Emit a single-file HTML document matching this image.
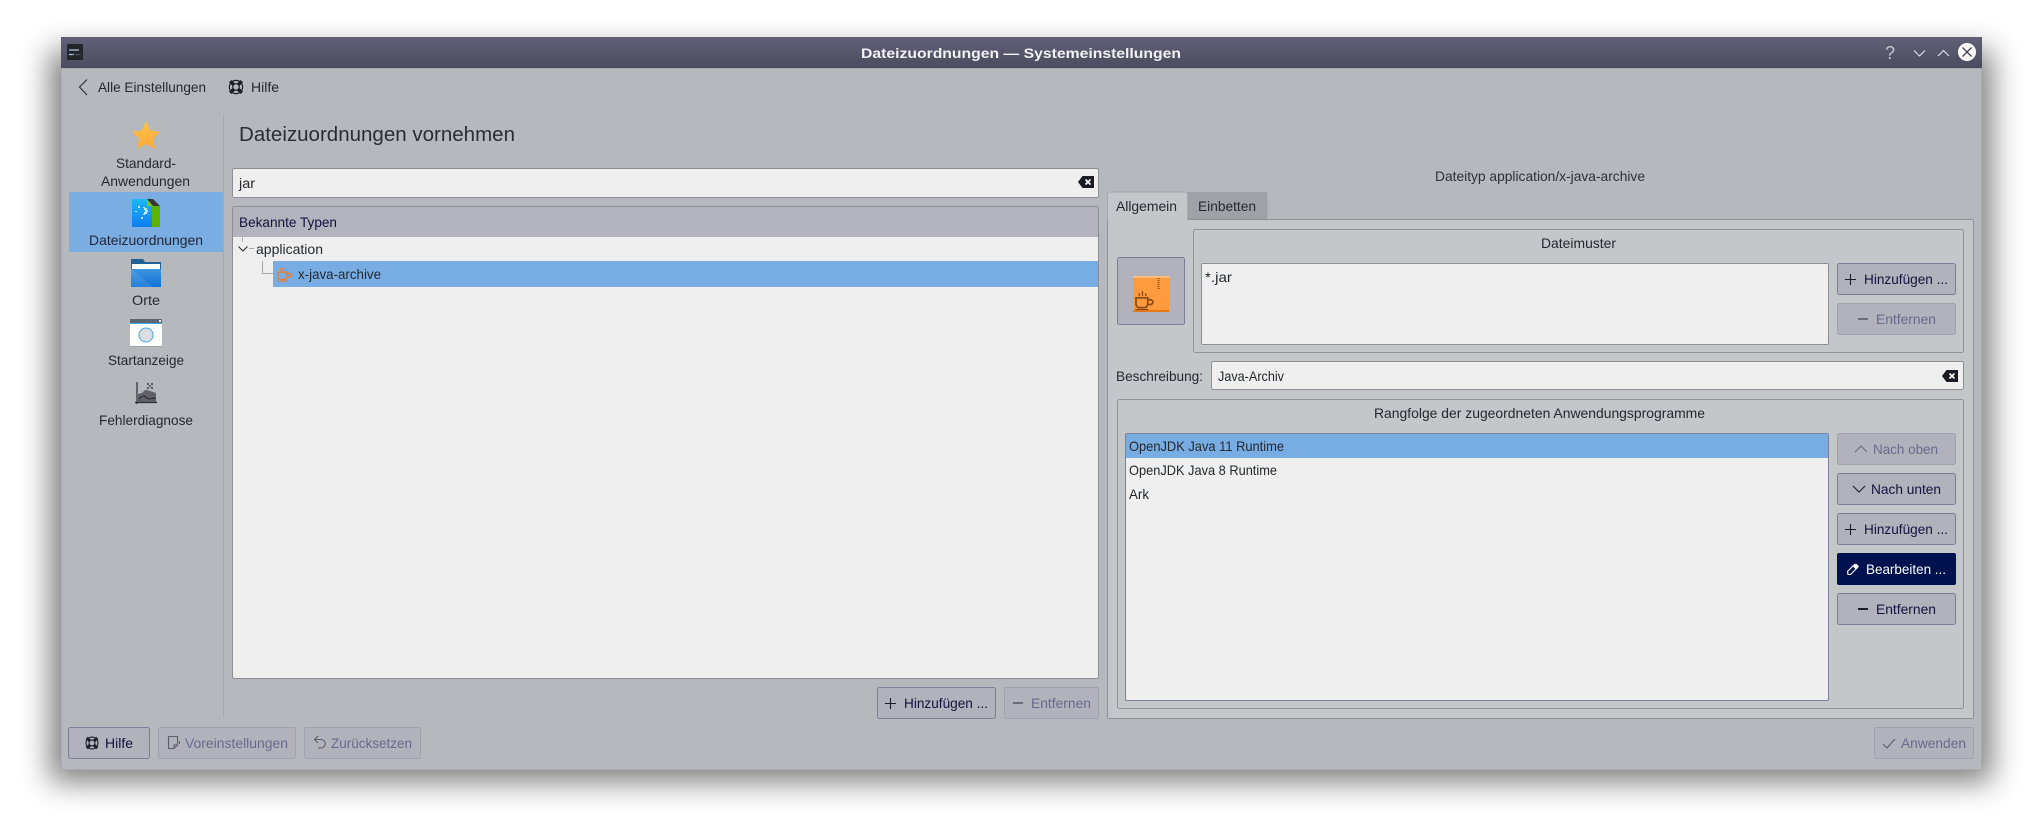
<!DOCTYPE html>
<html lang="de"><head><meta charset="utf-8"><title>Dateizuordnungen — Systemeinstellungen</title>
<style>
html,body{margin:0;padding:0;background:#fff;width:2042px;height:831px;overflow:hidden}
svg{display:block;position:absolute;left:0;top:0}
text{font-family:"Liberation Sans",sans-serif;font-size:14px;fill:#25282c}
.b{fill:#12123f}.d{fill:#666a8c}.w{fill:#fff}
.btn{fill:#b2b2bc;stroke:#7d7d98}.dis{fill:#b2b2bc;stroke:#a0a0ae}
.f{fill:#efefef;stroke:#8d8e94}.g{fill:#c3c7ca;stroke:#8f9297}
</style></head><body>
<svg width="2042" height="831" viewBox="0 0 2042 831" xmlns="http://www.w3.org/2000/svg">
<defs>
<filter id="sh" x="-10%" y="-20%" width="120%" height="140%"><feGaussianBlur stdDeviation="15"/></filter>
<linearGradient id="tb" x1="0" y1="0" x2="0" y2="1"><stop offset="0" stop-color="#616177"/><stop offset="1" stop-color="#4c4c60"/></linearGradient>
<linearGradient id="st" x1="0" y1="0" x2="0" y2="1"><stop offset="0" stop-color="#ffc24d"/><stop offset="1" stop-color="#fda93a"/></linearGradient>
<linearGradient id="bl" x1="0" y1="0" x2="0" y2="1"><stop offset="0" stop-color="#1cb8f4"/><stop offset="1" stop-color="#0f7df0"/></linearGradient>
<linearGradient id="fo" x1="0" y1="0" x2="0" y2="1"><stop offset="0" stop-color="#3f95dd"/><stop offset="1" stop-color="#0b72d6"/></linearGradient>
<g id="buoy"><circle cx="0" cy="0" r="6.600" fill="none" stroke="#1c1e26" stroke-width="1.200"/><circle cx="0" cy="0" r="3.300" fill="none" stroke="#1c1e26" stroke-width="1.200"/><path d="M-5.800-5.800L-2.400-2.400M5.800-5.800L2.400-2.400M-5.800 5.800L-2.400 2.400M5.800 5.800L2.400 2.400" stroke="#1c1e26" stroke-width="3.400" fill="none"/></g>
<g id="clr"><path d="M-8 0L-3.500-6H8V6H-3.500Z" fill="#1a1b22"/><path d="M-0.500-2.500L4.500 2.500M4.500-2.500L-0.500 2.500" stroke="#fff" stroke-width="1.600"/></g>
<g id="cup"><path d="M0 6h9v5a2.500 2.500 0 0 1-2.500 2.500h-4A2.500 2.500 0 0 1 0 11zM9 7.500h2.200a1.300 1.300 0 0 1 0 3.600H9" fill="none" stroke-width="1.300"/><path d="M2.500 4.500v-2M5 4.500V1M7.500 4.500v-2M-.5 15h10" fill="none" stroke-width="1"/></g>
</defs>

<!-- shadow + window -->
<rect x="50" y="50" width="1942" height="732" fill="#000" opacity=".5" filter="url(#sh)"/>
<rect x="61" y="37" width="1921" height="733" fill="#b5b8bd"/>
<rect x="61.500" y="68.500" width="1920" height="701" fill="none" stroke="#a9acb1"/>
<rect x="61" y="37" width="1921" height="31" fill="url(#tb)"/>

<!-- titlebar -->
<rect x="67" y="44" width="16" height="16" rx="1" fill="#22262a"/>
<path d="M69 50h10M69 54.500h3" stroke="#b9c6d2" stroke-width="1.300"/><path d="M75 54.500h6" stroke="#4d5257" stroke-width="1.300"/><path d="M72 54.500h2" stroke="#5ab5e5" stroke-width="1.300"/>
<text x="861" y="58" font-weight="bold" textLength="320" lengthAdjust="spacingAndGlyphs" style="fill:#f2f2f5">Dateizuordnungen — Systemeinstellungen</text>
<text x="1885" y="59" style="fill:#c4c4cf;font-size:18px">?</text>
<path d="M1914 50.500l5.500 5.500 5.500-5.500M1938 56l5.500-5.500 5.500 5.500" fill="none" stroke="#e4e4ea" stroke-width="1.100"/>
<circle cx="1967" cy="52" r="9" fill="#fbfbfc"/><path d="M1962.500 47.500l9 9M1971.500 47.500l-9 9" stroke="#43435a" stroke-width="1.300"/>

<!-- toolbar -->
<path d="M87 79.500L79.500 87l7.500 8" fill="none" stroke="#2a2c33" stroke-width="1.100"/>
<text x="98" y="92" textLength="108" lengthAdjust="spacingAndGlyphs">Alle Einstellungen</text>
<use href="#buoy" x="236" y="87"/>
<text x="251" y="92" textLength="28" lengthAdjust="spacingAndGlyphs">Hilfe</text>

<!-- sidebar -->
<polygon points="146,121 150.400,130.500 160,131.800 153,138.800 154.900,149 146,144 137.100,149 139,138.800 132,131.800 141.600,130.500" fill="url(#st)"/>
<text x="116" y="168" textLength="60" lengthAdjust="spacingAndGlyphs">Standard-</text>
<text x="101" y="186" textLength="89" lengthAdjust="spacingAndGlyphs">Anwendungen</text>
<rect x="69" y="192" width="154" height="60" fill="#7aaee3"/>
<rect x="132" y="199" width="21" height="28" fill="url(#bl)"/>
<rect x="154" y="206" width="6" height="21" fill="#5bb400"/><path d="M147 199h6v7zM152 206h2v21h-2z" fill="#5bb400"/>
<path d="M147 199h6l7 7h-13z" fill="#34363a"/><path d="M147 199l6 7h-6z" fill="#79c81c"/>
<path d="M143 207h2v1h2v2h1v2h-1v2h-2v1h-2v-1h1v-2h1v-2h-1v-2h-1zM138 206h2v2h-2zM135 211h2v1h-2zM141 217h2v2h-2z" fill="#bfe6ff"/>
<text x="89" y="245" textLength="114" lengthAdjust="spacingAndGlyphs" style="fill:#1f2436">Dateizuordnungen</text>
<path d="M131 287v-28h12l2 3h16v25z" fill="#1f6398"/>
<rect x="132" y="264" width="28" height="5" fill="#fff"/>
<path d="M131 269h30v18h-30z" fill="url(#fo)"/><path d="M131 269v18h22z" fill="#fff" opacity=".1"/>
<text x="132" y="305" textLength="28" lengthAdjust="spacingAndGlyphs">Orte</text>
<rect x="130" y="319" width="32" height="28" fill="#fff"/><rect x="130" y="319" width="32" height="4" fill="#5a6672"/><rect x="130" y="323" width="32" height="1" fill="#3daee9"/>
<rect x="159" y="320" width="2" height="2" fill="#eee"/><rect x="130" y="346" width="32" height="1" fill="#9ea1a5"/>
<circle cx="146" cy="335" r="7" fill="#dcdde0" stroke="#3daee9" stroke-width="1"/>
<text x="108" y="365" textLength="76" lengthAdjust="spacingAndGlyphs">Startanzeige</text>
<path d="M137 382v22M135 402.500h22" stroke="#2a2c34" stroke-width="1.200" fill="none"/>
<path d="M138 402v-8l4-1 3-3h2l3 1 3 1 3 1v9z" fill="#5f6068"/><path d="M139 399c3-3 4-3 5-3s3 3 5 3 3-1 7-1" fill="none" stroke="#25262c"/>
<path d="M147 384h2M151 384h2M149 386h2M147 388h2M151 388h2" stroke="#25262c" stroke-width="1.200"/>
<text x="99" y="425" textLength="94" lengthAdjust="spacingAndGlyphs">Fehlerdiagnose</text>
<path d="M223.500 114v604" stroke="#89b0dd"/>

<!-- heading -->
<text x="239" y="141" textLength="276" lengthAdjust="spacingAndGlyphs" style="font-size:20px;fill:#2a2d35">Dateizuordnungen vornehmen</text>

<!-- left -->
<rect x="232.500" y="168.500" width="866" height="29" rx="2" class="f"/>
<text x="239" y="188" textLength="16" lengthAdjust="spacingAndGlyphs">jar</text>
<use href="#clr" x="1086" y="182"/>
<rect x="232.500" y="206.500" width="866" height="472" rx="2" class="f"/>
<rect x="233" y="207" width="865" height="30" fill="#b3b3bd"/>
<text x="239" y="227" textLength="98" lengthAdjust="spacingAndGlyphs" class="b">Bekannte Typen</text>
<path d="M242.500 237v5M249 248.500h5M262.500 261v12.500H273" stroke="#a8a8ac" fill="none"/>
<path d="M238.500 246.500l4.500 4.500 4.500-4.500" fill="none" stroke="#2a2c33" stroke-width="1.100"/>
<text x="256" y="254" textLength="67" lengthAdjust="spacingAndGlyphs">application</text>
<rect x="273" y="261" width="825" height="26" fill="#78ade3"/>
<use href="#cup" x="278" y="266" stroke="#f5781e"/>
<text x="298" y="279" textLength="83" lengthAdjust="spacingAndGlyphs">x-java-archive</text>

<rect x="877.500" y="687.500" width="118" height="31" rx="2" class="btn"/>
<path d="M885 703.500h11M890.500 698v11" stroke="#1c1e26" stroke-width="1.100"/>
<text x="904" y="708" textLength="84" lengthAdjust="spacingAndGlyphs" class="b">Hinzufügen ...</text>
<rect x="1004.500" y="687.500" width="94" height="31" rx="2" class="dis"/>
<path d="M1013 703h10" stroke="#6c6c76" stroke-width="2"/>
<text x="1031" y="708" textLength="60" lengthAdjust="spacingAndGlyphs" class="d">Entfernen</text>

<!-- right -->
<text x="1435" y="181" textLength="210" lengthAdjust="spacingAndGlyphs" style="fill:#2e3136">Dateityp application/x-java-archive</text>
<path d="M1187.500 219v-25a2 2 0 0 1 2-2h76a2 2 0 0 1 2 2v25z" fill="#9ea1a6"/>
<text x="1198" y="211" textLength="58" lengthAdjust="spacingAndGlyphs">Einbetten</text>
<rect x="1107.500" y="219.500" width="866" height="499" rx="2" class="g"/>
<path d="M1107.500 220v-26a2 2 0 0 1 2-2h76a2 2 0 0 1 2 2v26z" fill="#c3c7ca"/>
<path d="M1107.500 220v-26a2 2 0 0 1 2-2h76a2 2 0 0 1 2 2v25.500" fill="none" stroke="#a6a9ad"/>
<path d="M1108 220h79v-1h-79z" fill="#c3c7ca"/>
<text x="1116" y="211" textLength="61" lengthAdjust="spacingAndGlyphs">Allgemein</text>

<rect x="1117.500" y="257.500" width="67" height="67" rx="2" class="btn"/>
<rect x="1133" y="276" width="36" height="36" fill="#ff9b3e"/>
<rect x="1133" y="276" width="36" height="2" fill="#ffbd7d"/><rect x="1133" y="310" width="36" height="2" fill="#e87818"/>
<path d="M1158.500 278v12" stroke="#a8601f" stroke-width="2.500" stroke-dasharray="1 1"/>
<g transform="translate(1136,290) scale(1.300)"><use href="#cup" stroke="#8a4a12"/></g>

<rect x="1193.500" y="229.500" width="770" height="123" rx="2" class="g"/>
<text x="1541" y="248" textLength="75" lengthAdjust="spacingAndGlyphs">Dateimuster</text>
<rect x="1201.500" y="263.500" width="627" height="81" rx="1.500" class="f"/>
<text x="1205" y="282" textLength="27" lengthAdjust="spacingAndGlyphs" style="fill:#22252c">*.jar</text>
<rect x="1837.500" y="263.500" width="118" height="31" rx="2" class="btn"/>
<path d="M1845 279.500h11M1850.500 274v11" stroke="#1c1e26" stroke-width="1.100"/>
<text x="1864" y="284" textLength="84" lengthAdjust="spacingAndGlyphs" class="b">Hinzufügen ...</text>
<rect x="1837.500" y="303.500" width="118" height="31" rx="2" class="dis"/>
<path d="M1858 319h10" stroke="#6c6c76" stroke-width="2"/>
<text x="1876" y="324" textLength="60" lengthAdjust="spacingAndGlyphs" class="d">Entfernen</text>

<text x="1116" y="381" textLength="87" lengthAdjust="spacingAndGlyphs">Beschreibung:</text>
<rect x="1211.500" y="361.500" width="752" height="28" rx="2" class="f"/>
<text x="1218" y="381" textLength="66" lengthAdjust="spacingAndGlyphs">Java-Archiv</text>
<use href="#clr" x="1950" y="376"/>

<rect x="1117.500" y="399.500" width="846" height="309" rx="2" class="g"/>
<text x="1374" y="418" textLength="331" lengthAdjust="spacingAndGlyphs">Rangfolge der zugeordneten Anwendungsprogramme</text>
<rect x="1125.500" y="433.500" width="703" height="267" rx="1.500" fill="#efefef" stroke="#7f7f9b"/>
<rect x="1126" y="434" width="702" height="24" fill="#78ade3"/>
<text x="1129" y="451" textLength="155" lengthAdjust="spacingAndGlyphs">OpenJDK Java 11 Runtime</text>
<text x="1129" y="475" textLength="148" lengthAdjust="spacingAndGlyphs">OpenJDK Java 8 Runtime</text>
<text x="1129" y="499" textLength="20" lengthAdjust="spacingAndGlyphs">Ark</text>

<rect x="1837.500" y="433.500" width="118" height="31" rx="2" class="dis"/>
<path d="M1855 452l6-6 6 6" fill="none" stroke="#6c6c76" stroke-width="1.100"/>
<text x="1873" y="454" textLength="65" lengthAdjust="spacingAndGlyphs" class="d">Nach oben</text>
<rect x="1837.500" y="473.500" width="118" height="31" rx="2" class="btn"/>
<path d="M1853 486l6 6 6-6" fill="none" stroke="#1c1e26" stroke-width="1.100"/>
<text x="1871" y="494" textLength="70" lengthAdjust="spacingAndGlyphs" class="b">Nach unten</text>
<rect x="1837.500" y="513.500" width="118" height="31" rx="2" class="btn"/>
<path d="M1845 529.500h11M1850.500 524v11" stroke="#1c1e26" stroke-width="1.100"/>
<text x="1864" y="534" textLength="84" lengthAdjust="spacingAndGlyphs" class="b">Hinzufügen ...</text>
<rect x="1837" y="553" width="119" height="32" rx="2" fill="#00114f"/>
<path d="M1848 574.500l-.500-3 7-7 3 3-7 7z" fill="none" stroke="#fff" stroke-width="1.100"/><path d="M1853 566.500l3-3 3 3-3 3z" fill="#fff"/>
<text x="1866" y="574" textLength="80" lengthAdjust="spacingAndGlyphs" class="w">Bearbeiten ...</text>
<rect x="1837.500" y="593.500" width="118" height="31" rx="2" class="btn"/>
<path d="M1858 609h10" stroke="#1c1e26" stroke-width="2"/>
<text x="1876" y="614" textLength="60" lengthAdjust="spacingAndGlyphs" class="b">Entfernen</text>

<!-- bottom -->
<rect x="68.500" y="727.500" width="81" height="31" rx="2" class="btn"/>
<g transform="translate(92,743) scale(.9)"><use href="#buoy"/></g>
<text x="105" y="748" textLength="28" lengthAdjust="spacingAndGlyphs" class="b">Hilfe</text>
<rect x="158.500" y="727.500" width="137" height="31" rx="2" class="dis"/>
<path d="M174.500 748.500h-6v-12h9v8.500l-3.500 3.500M177.500 745h-3.500v3.500M179.500 741v3" fill="none" stroke="#5e5e68" stroke-width="1.100"/>
<text x="185" y="748" textLength="103" lengthAdjust="spacingAndGlyphs" class="d">Voreinstellungen</text>
<rect x="304.500" y="727.500" width="116" height="31" rx="2" class="dis"/>
<path d="M318 736l-3.500 3.500 3.500 3.500M315 739.500h6a4.200 4.200 0 0 1 0 8.500h-3" fill="none" stroke="#5e5e68" stroke-width="1.100"/>
<text x="331" y="748" textLength="81" lengthAdjust="spacingAndGlyphs" class="d">Zurücksetzen</text>
<rect x="1874.500" y="727.500" width="99" height="31" rx="2" class="dis"/>
<path d="M1883 744l4 4 8-9" fill="none" stroke="#5e5e68" stroke-width="1.100"/>
<text x="1901" y="748" textLength="65" lengthAdjust="spacingAndGlyphs" class="d">Anwenden</text>
</svg>
</body></html>
